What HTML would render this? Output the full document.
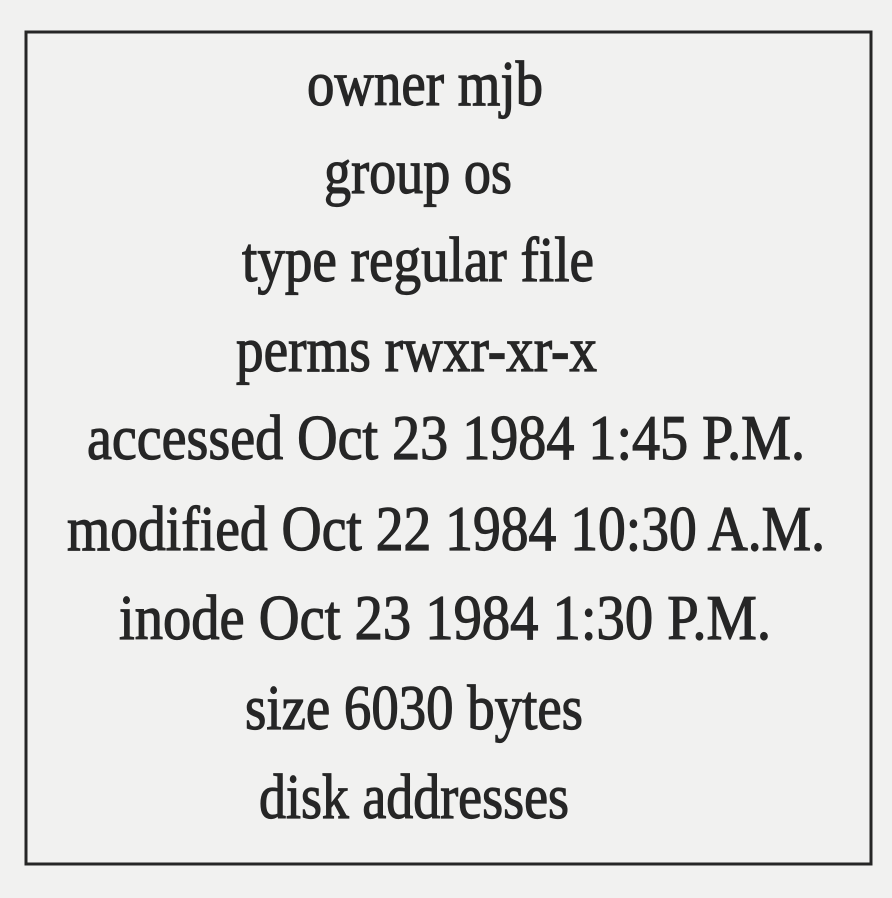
<!DOCTYPE html>
<html><head><meta charset="utf-8"><style>
html,body{margin:0;padding:0;background:#f1f1f0;}
svg{display:block}
text{font-family:"Liberation Serif",serif;font-size:63px;fill:#262626;stroke:#262626;stroke-width:1.2px;}
</style></head><body>
<svg width="892" height="898" viewBox="0 0 892 898" xmlns="http://www.w3.org/2000/svg">
<rect x="0" y="0" width="892" height="898" fill="#f1f1f0"/>
<rect x="26" y="32" width="845" height="832" fill="none" stroke="#262626" stroke-width="3"/>
<text x="307" y="105" textLength="236" lengthAdjust="spacingAndGlyphs">owner mjb</text>
<text x="324" y="193" textLength="188" lengthAdjust="spacingAndGlyphs">group os</text>
<text x="242" y="281" textLength="352" lengthAdjust="spacingAndGlyphs">type regular file</text>
<text x="236" y="371" textLength="361" lengthAdjust="spacingAndGlyphs">perms rwxr-xr-x</text>
<text x="87" y="459" textLength="718" lengthAdjust="spacingAndGlyphs">accessed Oct 23 1984 1:45 P.M.</text>
<text x="67" y="550" textLength="758" lengthAdjust="spacingAndGlyphs">modified Oct 22 1984 10:30 A.M.</text>
<text x="119" y="639" textLength="652" lengthAdjust="spacingAndGlyphs">inode Oct 23 1984 1:30 P.M.</text>
<text x="245" y="729" textLength="338" lengthAdjust="spacingAndGlyphs">size 6030 bytes</text>
<text x="259" y="818" textLength="310" lengthAdjust="spacingAndGlyphs">disk addresses</text>
</svg>
</body></html>
